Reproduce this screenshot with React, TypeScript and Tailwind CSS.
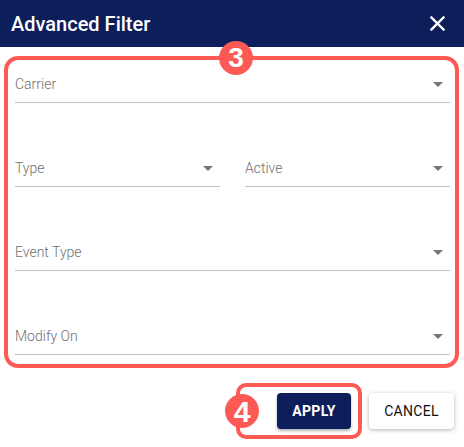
import React from 'react';

const RED = 'border-[#fe5a55]';

const Arrow = () => (
    <svg width="10" height="5" viewBox="0 0 10 5" className="shrink-0">
        <path d="M0 0 L10 0 L5 5 Z" fill="#757575" />
    </svg>
);

const SelectField = ({ label }: { label: string }) => (
    <div className="flex items-center justify-between border-b border-[#c2c2c2] pb-[8px] pr-[7px]">
        <span className="text-[14px] leading-[20px] font-light text-[#6f6f6f]">{label}</span>
        <Arrow />
    </div>
);

export default function App() {
    return (
        <div className="w-[464px] h-[447px] bg-white overflow-hidden" style={{ fontFamily: 'Roboto, "Liberation Sans", sans-serif' }}>
            {/* Header */}
            <div className="h-[47px] bg-[#0c1f5a] flex items-center justify-between pl-[11px] pr-[19px]">
                <h2 className="text-white text-[20px] font-medium leading-none">Advanced Filter</h2>
                <svg width="15" height="15" viewBox="0 0 15 15">
                    <path d="M1.5 1.5 L13.5 13.5 M13.5 1.5 L1.5 13.5" stroke="white" strokeWidth="2.4" strokeLinecap="square" />
                </svg>
            </div>

            {/* Form (annotated) */}
            <div className={`relative mt-[9px] ml-[4px] mr-[5px] border-4 ${RED} rounded-[14px] pl-[7px] pr-[5px] pt-[14px] pb-[9px] flex flex-col gap-[55px]`}>
                <div className="absolute left-[211px] top-[-19px] w-[34px] h-[34px] rounded-full bg-[#fe5a55] flex items-center justify-center text-white text-[28px] font-bold" style={{ fontFamily: '"Liberation Sans", Arial, sans-serif' }}>
                    3
                </div>
                <SelectField label="Carrier" />
                <div className="grid grid-cols-2 gap-[25px]">
                    <SelectField label="Type" />
                    <SelectField label="Active" />
                </div>
                <SelectField label="Event Type" />
                <SelectField label="Modify On" />
            </div>

            {/* Actions */}
            <div className="mt-[15px] flex items-center justify-end pr-[10px] gap-[7px]">
                <div className={`relative border-4 ${RED} rounded-[10px] pl-[37px] pr-[7px] py-[6px]`}>
                    <div className="absolute left-[-15px] top-1/2 -translate-y-1/2 w-[34px] h-[34px] rounded-full bg-[#fe5a55] flex items-center justify-center text-white text-[30px] font-bold" style={{ fontFamily: '"Liberation Sans", Arial, sans-serif' }}>
                        4
                    </div>
                    <button className="w-[74px] h-[36px] rounded-[4px] bg-[#0c1f5a] text-white text-[14px] font-bold tracking-[0.3px] shadow-[0_2px_3px_rgba(0,0,0,0.3)]">
                        APPLY
                    </button>
                </div>
                <button className="w-[85px] h-[36px] rounded-[4px] bg-white text-[#111] text-[14px] font-normal tracking-[0.3px] shadow-[0_1px_4px_rgba(0,0,0,0.3)]">
                    CANCEL
                </button>
            </div>
        </div>
    );
}
